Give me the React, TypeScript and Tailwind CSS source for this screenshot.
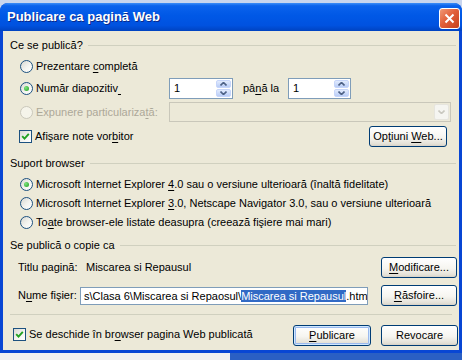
import React from 'react';

const U = ({ children }: { children: React.ReactNode }) => (
  <span className="underline decoration-1 underline-offset-[2px]">{children}</span>
);

function Radio({ checked = false, disabled = false }: { checked?: boolean; disabled?: boolean }) {
  return (
    <span
      className={`flex h-[13px] w-[13px] shrink-0 items-center justify-center rounded-full border ${
        disabled
          ? 'border-[#cac8bb] bg-[#f5f4ea]'
          : 'border-[#1c5180] bg-[linear-gradient(135deg,#d8d8d2_0%,#f4f4f0_55%,#ffffff_100%)]'
      }`}
    >
      {checked && (
        <span className="h-[5px] w-[5px] rounded-full bg-[radial-gradient(circle_at_35%_35%,#7fe47f,#1f9e1f)]" />
      )}
    </span>
  );
}

function Check() {
  return (
    <span className="flex h-[13px] w-[13px] shrink-0 items-center justify-center border border-[#1c5180] bg-[linear-gradient(135deg,#d8d8d2_0%,#f4f4f0_55%,#ffffff_100%)]">
      <svg width="9" height="9" viewBox="0 0 9 9">
        <path d="M1.2 4.2 L3.5 6.6 L7.8 1.8" fill="none" stroke="#21a121" strokeWidth="1.9" />
      </svg>
    </span>
  );
}

function Btn({ children, className, def = false }: { children: React.ReactNode; className: string; def?: boolean }) {
  return (
    <button
      type="button"
      className={`flex h-[21px] shrink-0 items-center justify-center rounded-[3px] border border-[#003c74] bg-[linear-gradient(180deg,#ffffff_0%,#f6f5f0_55%,#e3e0d6_90%,#d6d0c5_100%)] text-[11px] text-black ${
        def ? 'shadow-[inset_0_0_0_1px_#cee7ff,inset_0_0_0_2px_#9ab9ee]' : ''
      } ${className}`}
    >
      <span>{children}</span>
    </button>
  );
}

function Arrow({ up, color }: { up: boolean; color: string }) {
  return (
    <svg width="7" height="4" viewBox="0 0 7 4">
      <path d={up ? 'M0.5 3.5 L3.5 0.5 L6.5 3.5' : 'M0.5 0.5 L3.5 3.5 L6.5 0.5'} fill="none" stroke={color} strokeWidth="1.6" />
    </svg>
  );
}

function Spin({ className }: { className: string }) {
  return (
    <div className={`flex h-[21px] items-stretch border border-[#7f9db9] bg-white ${className}`}>
      <span className="flex-1 pl-[4px] leading-[19px]">1</span>
      <div className="m-[1px] flex w-[15px] flex-col gap-px">
        <div className="flex flex-1 items-center justify-center rounded-[2px] border border-[#c6d5fa] bg-[linear-gradient(180deg,#e2ebfd,#b9cdf7)]">
          <Arrow up color="#4d6185" />
        </div>
        <div className="flex flex-1 items-center justify-center rounded-[2px] border border-[#c6d5fa] bg-[linear-gradient(180deg,#e2ebfd,#b9cdf7)]">
          <Arrow up={false} color="#4d6185" />
        </div>
      </div>
    </div>
  );
}

function Group({ title, className }: { title: string; className: string }) {
  return (
    <div className={`flex h-[16px] items-center pl-[7px] pr-[3px] ${className}`}>
      <span>{title}</span>
      <div className="ml-[5px] h-px flex-1 bg-[#d0d0bf]" />
    </div>
  );
}

export default function App() {
  return (
    <div className="h-[360px] w-[462px] overflow-hidden bg-[#c8d5ee] font-['Liberation_Sans',Arial,sans-serif] text-[11px] text-black">
      <div className="mt-[3px] flex h-[350px] w-[462px] flex-col rounded-t-[8px] bg-[#0846d4]">
        {/* title bar */}
        <div className="flex h-[28px] shrink-0 items-center justify-between rounded-t-[8px] bg-[linear-gradient(180deg,#3c8ef8_0%,#0a62ec_10%,#0058e6_45%,#0052e0_80%,#0043c0_100%)] pl-[7px] pr-[2px]">
          <span className="text-[13px] font-bold text-white [text-shadow:1px_1px_0_#0b2a8a]">Publicare ca pagină Web</span>
          <div className="mt-[2px] flex h-[21px] w-[21px] items-center justify-center rounded-[3px] border border-white bg-[linear-gradient(135deg,#f09a78_0%,#e2603a_45%,#c5401c_100%)]">
            <svg width="11" height="11" viewBox="0 0 11 11">
              <path d="M1.5 1.5 L9.5 9.5 M9.5 1.5 L1.5 9.5" stroke="white" strokeWidth="2" />
            </svg>
          </div>
        </div>

        {/* body */}
        <div className="mx-[3px] mb-[3px] flex flex-1 flex-col bg-[#ece9d8]">
          <Group title="Ce se publică?" className="mt-[6px]" />

          <div className="mt-[4px] flex h-[18px] items-center gap-[3px] pl-[17px]">
            <Radio />
            <span>Prezentare <U>c</U>ompletă</span>
          </div>

          <div className="mt-[3px] flex h-[21px] items-center pl-[17px]">
            <div className="flex w-[149px] items-center gap-[3px]">
              <Radio checked />
              <span>Număr diapozitiv<U>{'\u00a0'}</U></span>
            </div>
            <Spin className="w-[64px]" />
            <span className="ml-[10px] w-[45px]">pâ<U>n</U>ă la</span>
            <Spin className="w-[63px]" />
          </div>

          <div className="mt-[3px] flex h-[20px] items-center pl-[17px]">
            <div className="flex w-[149px] items-center gap-[3px] text-[#aca899]">
              <Radio disabled />
              <span>Expunere particulariza<U>t</U>ă:</span>
            </div>
            <div className="flex h-[20px] w-[282px] border border-[#c9c7ba] bg-[#ece9d8]">
              <div className="flex-1" />
              <div className="m-[1px] flex w-[15px] items-center justify-center rounded-[2px] border border-[#e6e5de] bg-[#f5f5f1]">
                <Arrow up={false} color="#c9c8c0" />
              </div>
            </div>
          </div>

          <div className="mt-[4px] flex h-[21px] items-center justify-between pl-[16px] pr-[12px]">
            <div className="flex items-center gap-[3px]">
              <Check />
              <span>Afişare note vor<U>b</U>itor</span>
            </div>
            <Btn className="w-[78px]">Opţiuni <U>W</U>eb...</Btn>
          </div>

          <Group title="Suport browser" className="mt-[8px]" />

          <div className="mt-[4px] flex h-[19px] items-center gap-[3px] pl-[17px]">
            <Radio checked />
            <span>Microsoft Internet Explorer <U>4</U>.0 sau o versiune ulterioară (înaltă fidelitate)</span>
          </div>
          <div className="flex h-[19px] items-center gap-[3px] pl-[17px]">
            <Radio />
            <span>Microsoft Internet Explorer <U>3</U>.0, Netscape Navigator 3.0, sau o versiune ulterioară</span>
          </div>
          <div className="flex h-[19px] items-center gap-[3px] pl-[17px]">
            <Radio />
            <span>To<U>a</U>te browser-ele listate deasupra (creează fişiere mai mari)</span>
          </div>

          <Group title="Se publică o copie ca" className="mt-[5px]" />

          <div className="mt-[4px] flex h-[21px] items-center pl-[15px] pr-[2px]">
            <span className="w-[68px]">Titlu pagină:</span>
            <span className="flex-1">Miscarea si Repausul</span>
            <Btn className="w-[76px]"><U>M</U>odificare...</Btn>
          </div>

          <div className="mt-[7px] flex h-[21px] items-center pl-[15px] pr-[2px]">
            <span className="w-[62px]">N<U>u</U>me fişier:</span>
            <div className="flex h-[18px] w-[288px] overflow-hidden border border-[#7f9db9] bg-white pl-[3px] leading-[16px]">
              <span className="whitespace-nowrap">
                s\Clasa 6\Miscarea si Repaosul\<span className="bg-[#316ac5] text-white">Miscarea si Repausul</span>.htm
              </span>
            </div>
            <div className="flex-1" />
            <Btn className="w-[76px]"><U>R</U>ăsfoire...</Btn>
          </div>

          <div className="mx-[7px] mt-[8px] h-px bg-[#d0d0bf]" />

          <div className="mt-[10px] flex h-[21px] items-start pl-[10px] pr-[1px]">
            <div className="mt-[1px] flex flex-1 items-center gap-[3px]">
              <Check />
              <span>Se deschide în br<U>o</U>wser pagina Web publicată</span>
            </div>
            <Btn className="w-[78px]" def><U>P</U>ublicare</Btn>
            <Btn className="ml-[10px] w-[77px]">Revocare</Btn>
          </div>
        </div>
      </div>
      <div className="flex h-[7px]">
        <div className="w-[230px] bg-[#f0f0f0]" />
        <div className="flex-1 bg-[#2a5fc4]" />
      </div>
    </div>
  );
}
